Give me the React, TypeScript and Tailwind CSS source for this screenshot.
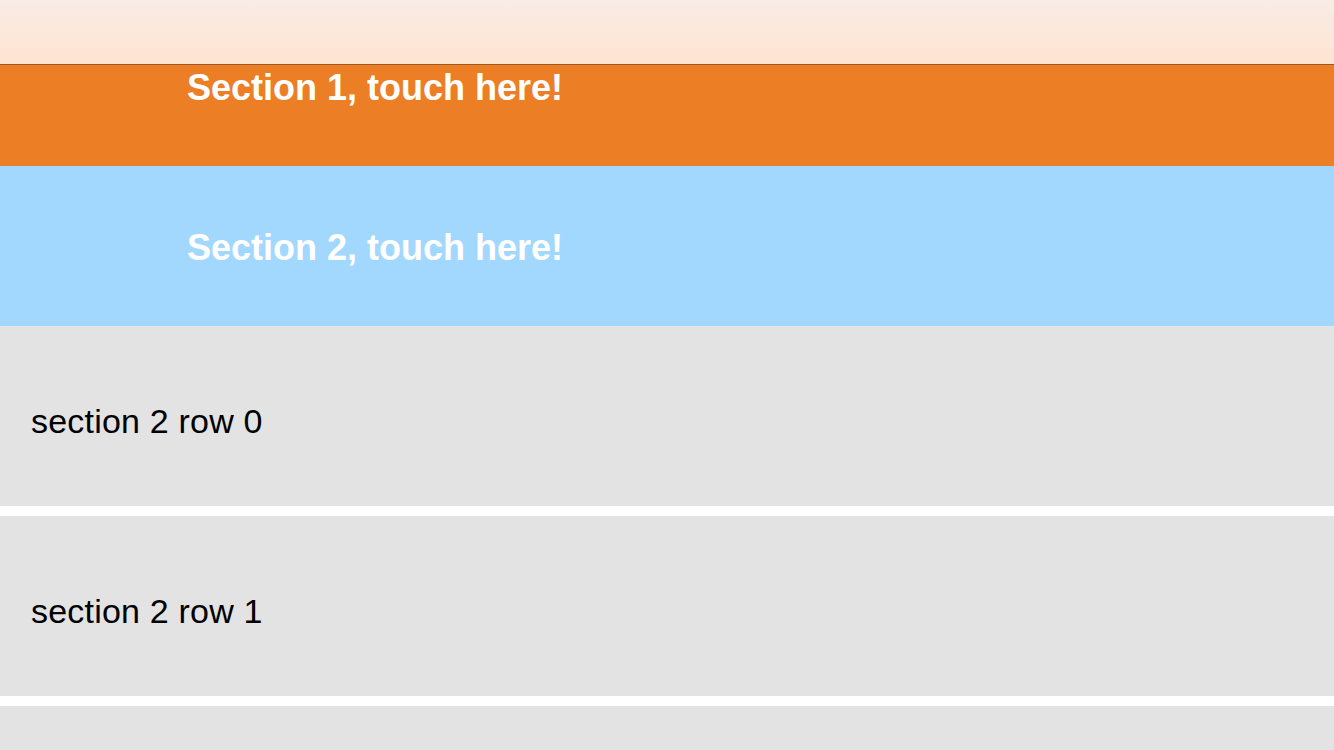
import React from 'react';

const rows = ['section 2 row 0', 'section 2 row 1'];

const App = () => {
  return (
    <div className="h-[750px] w-[1334px] overflow-hidden bg-white font-['Liberation_Sans',Helvetica,Arial,sans-serif]">
      {/* Navigation bar */}
      <div className="h-16 bg-gradient-to-b from-[#f9ece6] to-[#fee4d0] border-b border-[#a0561f] box-content" />

      {/* Section 1 header */}
      <div className="h-[101px] bg-[#ec7e26] pl-[187px] pt-[5px]">
        <h2 className="text-[36px] leading-9 font-bold text-white">Section 1, touch here!</h2>
      </div>

      {/* Section 2 header */}
      <div className="h-40 bg-[#a3d8fe] pl-[187px] pt-[3px] flex items-center">
        <h2 className="text-[36px] leading-9 font-bold text-white">Section 2, touch here!</h2>
      </div>

      {/* Rows */}
      <div className="flex flex-col gap-2.5">
        {rows.map((row) => (
          <div key={row} className="h-[180px] shrink-0 bg-[#e3e3e3] pl-[31px] pt-[10px] flex items-center">
            <span className="text-[34px] leading-[34px] tracking-[0.2px] text-black">{row}</span>
          </div>
        ))}
        {/* next row, cut by the bottom of the screen */}
        <div className="h-[180px] shrink-0 bg-[#e3e3e3]" />
      </div>
    </div>
  );
};

export default App;
